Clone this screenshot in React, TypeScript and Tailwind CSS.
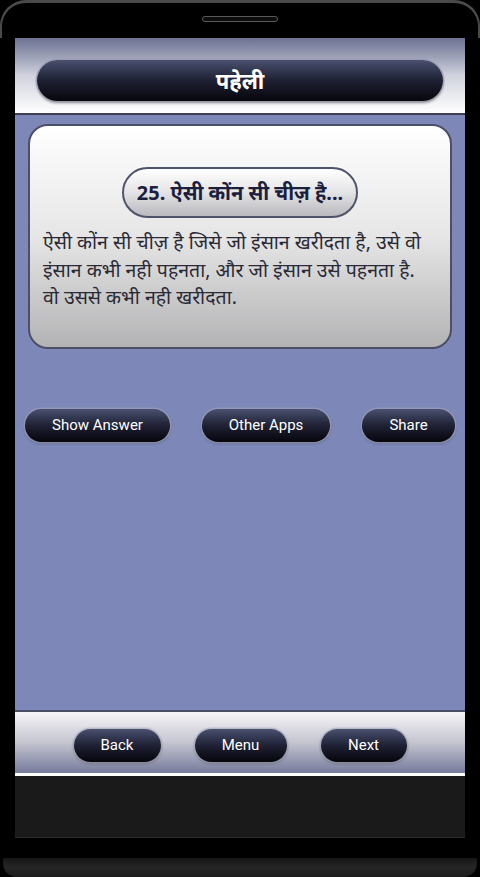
import React from "react";

const btn =
  "h-[33px] rounded-full bg-gradient-to-b from-[#4a5070] via-[#1f2235] to-[#06060c] text-white text-[15px] flex items-center justify-center shadow-[0_0_0_1.5px_rgba(170,172,190,0.55),0_1px_3px_rgba(0,0,0,0.5)]";

const hindi = { fontFamily: "'Noto Sans', 'Noto Sans Devanagari', sans-serif" };

export default function App() {
  return (
    <div className="w-[480px] h-[877px] bg-black flex flex-col overflow-hidden" style={{ fontFamily: "Roboto, 'Noto Sans', sans-serif" }}>
      {/* top bezel */}
      <div className="h-[38px] shrink-0 rounded-t-[26px] border-t-[3px] border-x-2 border-[#4a4a4a] bg-black flex items-center justify-center">
        <div className="w-[76px] h-[6px] rounded-full border border-[#5a5a5a] bg-[#0c0c0c] -mt-[3px]" />
      </div>
      {/* screen */}
      <div className="mx-[15px] flex flex-col flex-1 min-h-0">
        {/* header */}
        <div className="h-[77px] shrink-0 bg-gradient-to-b from-[#6d7293] via-[#d0d2dd] to-[#ffffff] border-b-2 border-[#3b3e55] flex items-start justify-center px-[22px] pt-[22px]">
          <div className="w-full h-[41px] rounded-full bg-gradient-to-b from-[#4b5170] via-[#1e2133] to-[#07070d] shadow-[0_0_0_1.5px_rgba(150,152,175,0.6),0_2px_3px_rgba(0,0,0,0.4)] flex items-center justify-center">
            <span className="text-white text-[22px] font-bold" style={hindi}>पहेली</span>
          </div>
        </div>
        {/* content */}
        <div className="h-[595px] shrink-0 bg-[#7e88b8] flex flex-col">
          <div className="mt-[9px] mx-[13px] h-[225px] rounded-[20px] border-2 border-[#4b4f68] bg-gradient-to-b from-[#ffffff] via-[#e6e6e6] to-[#b3b3b5] flex flex-col items-center pt-[41px] px-[13px]">
            <div className="w-[236px] h-[51px] rounded-full border-2 border-[#50546b] bg-gradient-to-b from-[#ffffff] via-[#e4e4e6] to-[#b9b9be] flex items-center justify-center">
              <span className="text-[#1c1f3c] text-[20px] font-bold" style={hindi}>25. ऐसी कोंन सी चीज़ है...</span>
            </div>
            <p className="mt-[10px] self-stretch text-[#2a2a36] text-[19.5px] leading-[27.5px]" style={hindi}>
              ऐसी कोंन सी चीज़ है जिसे जो इंसान खरीदता है, उसे वो इंसान कभी नही पहनता, और जो इंसान उसे पहनता है.
              <br />
              वो उससे कभी नही खरीदता.
            </p>
          </div>
          <div className="mt-[60px] px-[10px] flex justify-between">
            <div className={btn + " w-[145px]"}>Show Answer</div>
            <div className={btn + " w-[128px]"}>Other Apps</div>
            <div className={btn + " w-[93px]"}>Share</div>
          </div>
        </div>
        {/* footer */}
        <div className="h-[66px] shrink-0 border-t-2 border-[#4a4d66] border-b-[3px] border-b-white bg-gradient-to-b from-[#f6f6f8] via-[#c4c5d0] to-[#777b9b] flex items-start justify-center gap-[34px] pt-[17px]">
          <div className={btn + " w-[87px]"}>Back</div>
          <div className={btn + " w-[92px]"}>Menu</div>
          <div className={btn + " w-[86px]"}>Next</div>
        </div>
        <div className="h-[62px] shrink-0 bg-[#1a1a1a] border-b border-[#2a2a2a]" />
      </div>
      {/* bottom bezel */}
      <div className="h-[13px] shrink-0" />
      <div className="mx-[3px] h-[19px] shrink-0 rounded-b-[14px] bg-gradient-to-b from-[#161616] via-[#262626] to-[#1c1c1c]" />
    </div>
  );
}
